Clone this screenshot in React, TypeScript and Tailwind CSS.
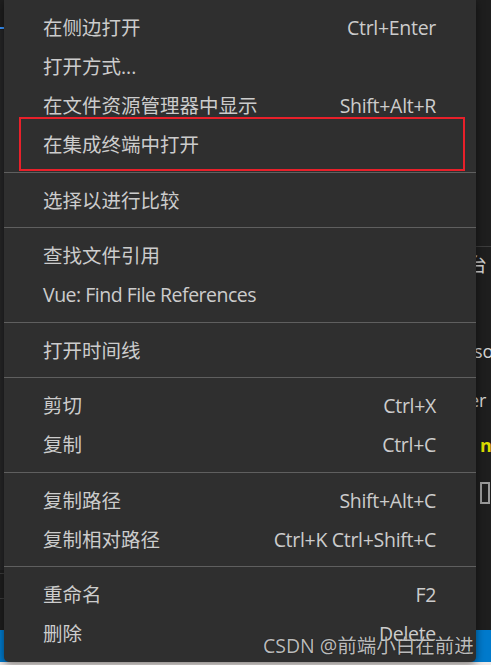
type Item = { label: string; keys?: string; boxed?: boolean };

const groups: Item[][] = [
  [
    { label: "在侧边打开", keys: "Ctrl+Enter" },
    { label: "打开方式..." },
    { label: "在文件资源管理器中显示", keys: "Shift+Alt+R" },
    { label: "在集成终端中打开", boxed: true },
  ],
  [{ label: "选择以进行比较" }],
  [{ label: "查找文件引用" }, { label: "Vue: Find File References" }],
  [{ label: "打开时间线" }],
  [
    { label: "剪切", keys: "Ctrl+X" },
    { label: "复制", keys: "Ctrl+C" },
  ],
  [
    { label: "复制路径", keys: "Shift+Alt+C" },
    { label: "复制相对路径", keys: "Ctrl+K Ctrl+Shift+C" },
  ],
  [
    { label: "重命名", keys: "F2" },
    { label: "删除", keys: "Delete" },
  ],
];

const font = "font-['Segoe_UI','Open_Sans','Noto_Sans_CJK_SC',sans-serif]";

// latin-only strings get tightened a bit so Open Sans sits closer to Segoe UI widths
const isLatin = (s: string) => /^[\x00-\x7f]+$/.test(s);

function MenuRow({ item }: { item: Item }) {
  return (
    <div className="relative flex h-[39px] items-center justify-between pl-[39px] pr-[40px]">
      <span className={isLatin(item.label) ? "tracking-[-0.5px]" : ""}>{item.label}</span>
      {item.keys && <span className="tracking-[-0.3px]">{item.keys}</span>}
      {item.boxed && (
        <div className="absolute left-[15px] right-[11px] top-[-8px] bottom-[-7px] border-2 border-[#e8202a]" />
      )}
    </div>
  );
}

export default function App() {
  return (
    <div className={`relative h-[665px] w-[491px] overflow-hidden bg-[#1e1e1e] ${font}`}>
      {/* editor behind the menu */}
      <div className="flex h-full flex-col">
        <div className="relative flex-1 bg-[#1e1e1e]">
          <div className="absolute left-0 top-[27px] h-[2px] w-[6px] bg-[#3794ff]" />
          <div className="absolute left-0 top-[30px] h-[540px] w-[6px] bg-[#252526]" />
          <div className="absolute left-[476px] right-0 top-[246px] h-px bg-[#3c3c3c]" />
          <div className="absolute left-[468px] top-[256px] text-[19px] leading-none text-[#cfcfcf]">台</div>
          <div className="absolute left-[474px] top-[342px] text-[18px] leading-none text-[#d4d4d4]">so</div>
          <div className="absolute left-[469px] top-[391px] text-[18px] leading-none text-[#d4d4d4]">er</div>
          <div className="absolute left-[480px] top-[436px] text-[18px] font-bold leading-none text-[#dcdc00]">n</div>
          <div className="absolute left-[480px] top-[482px] h-[22px] w-[10px] border-2 border-[#9a9a9a]" />
          <div className="absolute left-0 top-[573px] h-px w-[6px] bg-[#3c3c3c]" />
          <div className="absolute left-0 top-[598px] h-px w-[6px] bg-[#3c3c3c]" />
        </div>
        <div className="h-[32px] bg-[#007acc]" />
        <div className="h-[3px] bg-[#efe9e7]" />
      </div>

      {/* context menu */}
      <div className="absolute left-[4px] top-0 h-[662px] w-[472px] rounded-b-[5px] bg-[#2f2f2f] pt-[8px] text-[19.5px] leading-none text-[#cccccc] shadow-[0_2px_8px_rgba(0,0,0,0.5)]">
        {groups.map((g, gi) => (
          <div key={gi}>
            {gi > 0 && (
              <div className={`h-px bg-[#5f5f5f] ${gi % 2 === 1 ? "mb-[8px] mt-[8px]" : "mb-[8px] mt-[7px]"}`} />
            )}
            {g.map((item) => (
              <MenuRow key={item.label} item={item} />
            ))}
          </div>
        ))}
      </div>

      {/* watermark */}
      <div className="absolute left-[263px] top-[636px] text-[19.5px] leading-none text-[#dadada]/85 [text-shadow:0_0_1px_rgba(0,0,0,0.6)]">
        CSDN @前端小白在前进
      </div>
    </div>
  );
}
